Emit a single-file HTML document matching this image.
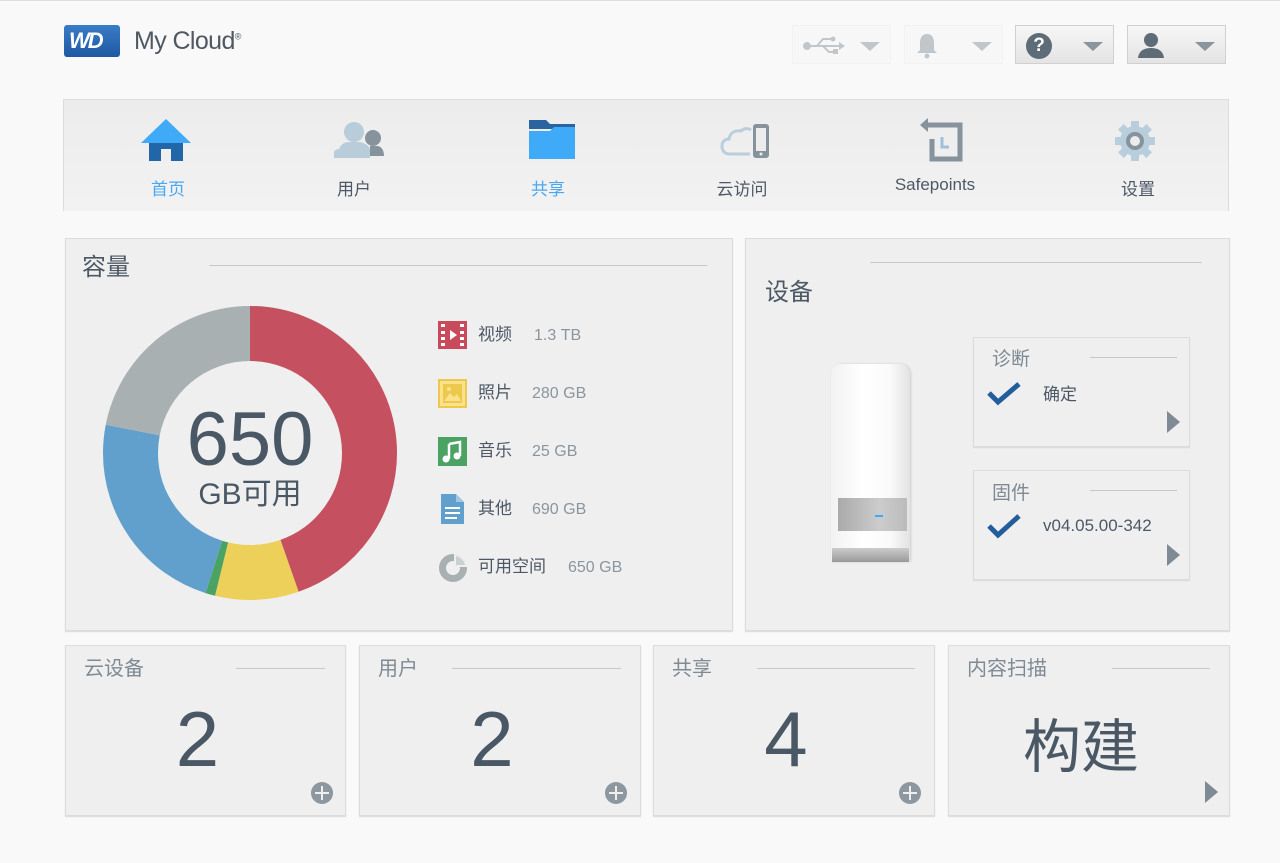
<!DOCTYPE html>
<html><head><meta charset="utf-8"><style>
*{margin:0;padding:0;box-sizing:border-box}
body{width:1280px;height:863px;background:#f9f9f9;font-family:"Liberation Sans","Noto Sans CJK SC",sans-serif;position:relative;overflow:hidden;color:#4d5866}
.a{position:absolute}
.panel{position:absolute;background:#efefef;border:1px solid #dcdcdc;box-shadow:0 1px 1px #d8d8d8}
.hl{position:absolute;height:1px;background:#c8c8c8}
.btn{position:absolute;top:25px;width:99px;height:39px;border:1px solid #d0d0d0;background:linear-gradient(#f6f6f6,#e4e4e4)}
.btn.dis{border-color:#ececec;background:#f6f6f6;opacity:.5}
.tri{position:absolute;right:10px;top:16px;width:0;height:0;border-left:10px solid transparent;border-right:10px solid transparent;border-top:9px solid #8a959e}
.nav{position:absolute;top:175px;font-size:17px;color:#4d5866;text-align:center;width:120px}
.leg{position:absolute;left:478px;font-size:17px;color:#4d5866}
.leg span{font-size:16px;color:#8a959e;margin-left:20px}
.ct{position:absolute;font-size:20px;color:#7e8a94}
.big{position:absolute;font-size:78px;color:#4a5765;text-align:center;width:100%;top:48px}
.plus{position:absolute;width:22px;height:22px;border-radius:50%;background:#8c979f}
.plus:before{content:"";position:absolute;left:4px;top:10px;width:14px;height:2px;background:#efefef}
.plus:after{content:"";position:absolute;left:10px;top:4px;width:2px;height:14px;background:#efefef}
.arr{position:absolute;width:0;height:0;border-top:11px solid transparent;border-bottom:11px solid transparent;border-left:13px solid #7e8a94}
</style></head><body>
<div class="a" style="left:0;top:0;width:1280px;height:1px;background:#ddd"></div>
<div class="a" style="left:64px;top:25px;width:56px;height:32px;border-radius:3px;background:linear-gradient(#3a7cc7,#1e58a2)"></div>
<div class="a" style="left:69px;top:28px;color:#fff;font-weight:bold;font-style:italic;font-size:22px;letter-spacing:-2px">WD</div>
<div class="a" style="left:134px;top:27px;font-size:25px;color:#4f5862;letter-spacing:-.6px">My Cloud<sup style="font-size:9px">®</sup></div>
<div class="btn dis" style="left:792px"><svg class="a" style="left:8px;top:10px" width="50" height="20"><circle cx="6" cy="10" r="4" fill="#8a959e"/><path d="M6 10H40M16 10L22 3H30M22 10L28 16H33" stroke="#8a959e" stroke-width="2" fill="none"/><path d="M38 6L44 10L38 14Z" fill="#8a959e"/><circle cx="32" cy="3" r="2.5" fill="#8a959e"/><rect x="32" y="13" width="5" height="5" fill="#8a959e"/></svg><div class="tri"></div></div>
<div class="btn dis" style="left:904px"><svg class="a" style="left:10px;top:6px" width="24" height="28"><path d="M12 2C7 2 5 6 5 11V18L2 21H22L19 18V11C19 6 17 2 12 2Z" fill="#8a959e"/><circle cx="12" cy="24" r="2.5" fill="#8a959e"/></svg><div class="tri"></div></div>
<div class="btn" style="left:1015px"><div class="a" style="left:10px;top:7px;width:26px;height:26px;border-radius:50%;background:#5e6c78;color:#fff;font-weight:bold;font-size:19px;text-align:center;line-height:26px">?</div><div class="tri"></div></div>
<div class="btn" style="left:1127px"><svg class="a" style="left:8px;top:5px" width="30" height="28"><circle cx="15" cy="9" r="7" fill="#5e6c78"/><path d="M2 27C3 19 9 17 15 17C21 17 27 19 28 27Z" fill="#5e6c78"/></svg><div class="tri"></div></div>
<div class="a" style="left:63px;top:99px;width:1166px;height:112px;background:linear-gradient(#ececec,#f2f2f2);border:1px solid #dcdcdc;border-bottom:none"></div>
<svg class="a" style="left:140px;top:117px" width="52" height="45"><path d="M26 2L1 26H51Z" fill="#3faaf7"/><rect x="9" y="26" width="34" height="18" fill="#2266aa"/><rect x="21" y="32" width="10" height="12" fill="#efefef"/></svg>
<div class="nav" style="left:108px;color:#49a8f2">首页</div>
<svg class="a" style="left:332px;top:120px" width="54" height="40"><circle cx="22" cy="12" r="10" fill="#b8ccd9"/><path d="M7 29C10 22 15 22 18 22H26C30 22 36 24 38 29V38H2V32C3 30 5 29 7 29Z" fill="#b8ccd9"/><circle cx="41" cy="18" r="8" fill="#86939d"/><path d="M38 26H46C50 27 52 31 52 36H38Z" fill="#86939d"/></svg>
<div class="nav" style="left:294px">用户</div>
<svg class="a" style="left:528px;top:119px" width="48" height="41"><path d="M1 1H18L22 5H47V10H1Z" fill="#2a64a0"/><path d="M1 12H22L26 8H47V40H1Z" fill="#3faaf7"/></svg>
<div class="nav" style="left:488px;color:#49a8f2">共享</div>
<svg class="a" style="left:720px;top:122px" width="52" height="38"><path d="M30 32H10C4 32 2 28 2 24C2 19 6 17 9 17C10 10 16 8 21 9C24 6 28 6 31 8" stroke="#b9cedd" stroke-width="3" fill="none"/><rect x="33" y="2" width="16" height="34" rx="3" fill="#86939d"/><rect x="36" y="6" width="10" height="23" fill="#ececec"/><circle cx="41" cy="32" r="1.5" fill="#ececec"/></svg>
<div class="nav" style="left:682px">云访问</div>
<svg class="a" style="left:918px;top:117px" width="46" height="46"><path d="M10 8H42V42H14V22" stroke="#86939d" stroke-width="5" fill="none"/><path d="M2 8L10 1V15Z" fill="#86939d"/><path d="M24 20V30H31" stroke="#9fc0dc" stroke-width="3" fill="none"/></svg>
<div class="nav" style="left:875px;top:175px">Safepoints</div>
<svg class="a" style="left:1114px;top:120px" width="42" height="42"><g fill="#b9cedd"><circle cx="21" cy="21" r="15"/><rect x="17" y="1" width="8" height="40"/><rect x="1" y="17" width="40" height="8"/><rect x="17" y="1" width="8" height="40" transform="rotate(45 21 21)"/><rect x="17" y="1" width="8" height="40" transform="rotate(-45 21 21)"/></g><circle cx="21" cy="21" r="9" fill="#86939d"/><circle cx="21" cy="21" r="5" fill="#ececec"/></svg>
<div class="nav" style="left:1078px">设置</div>
<div class="panel" style="left:65px;top:238px;width:668px;height:393px"></div>
<div class="a" style="left:82px;top:247px;font-size:24px;color:#4d5866">容量</div>
<div class="hl" style="left:209px;top:265px;width:498px"></div>
<svg class="a" style="left:100px;top:303px" width="300" height="300" viewBox="0 0 300 300">
<g transform="rotate(-90 150 150)" fill="none" stroke-width="55">
<circle cx="150" cy="150" r="119.5" stroke="#c55060" stroke-dasharray="335 1000" stroke-dashoffset="0"/>
<circle cx="150" cy="150" r="119.5" stroke="#ecd05a" stroke-dasharray="69 1000" stroke-dashoffset="-335"/>
<circle cx="150" cy="150" r="119.5" stroke="#4aa363" stroke-dasharray="8 1000" stroke-dashoffset="-404"/>
<circle cx="150" cy="150" r="119.5" stroke="#61a0cc" stroke-dasharray="174 1000" stroke-dashoffset="-412"/>
<circle cx="150" cy="150" r="119.5" stroke="#a9b0b2" stroke-dasharray="165 1000" stroke-dashoffset="-586"/>
</g></svg>
<div class="a" style="left:150px;top:397px;width:200px;text-align:center;font-size:76px;color:#4a5765;line-height:86px">650</div>
<div class="a" style="left:150px;top:469px;width:200px;text-align:center;font-size:30px;color:#4a5765">GB可用</div>
<svg class="a" style="left:438px;top:321px" width="30" height="28"><rect width="29" height="28" fill="#c94a5a"/><g fill="#fff"><rect x="3" y="3" width="4" height="3"/><rect x="3" y="10" width="4" height="3"/><rect x="3" y="16" width="4" height="3"/><rect x="3" y="22" width="4" height="3"/><rect x="22" y="3" width="4" height="3"/><rect x="22" y="10" width="4" height="3"/><rect x="22" y="16" width="4" height="3"/><rect x="22" y="22" width="4" height="3"/><path d="M12 9L19 14L12 19Z"/></g></svg>
<div class="leg" style="top:320px">视频<span style="margin-left:22px">1.3 TB</span></div>
<svg class="a" style="left:438px;top:379px" width="30" height="29"><rect x="1" y="1" width="27" height="27" fill="#fae18a" stroke="#ecc94d" stroke-width="2"/><rect x="5" y="5" width="19" height="19" fill="#ecc94d"/><path d="M6 22L12 14L16 18L19 15L23 22Z" fill="#fae18a"/><circle cx="11" cy="10" r="2" fill="#fae18a"/></svg>
<div class="leg" style="top:378px">照片<span>280 GB</span></div>
<svg class="a" style="left:438px;top:437px" width="30" height="29"><rect width="29" height="29" fill="#4aa363"/><path d="M11 7L22 5V19" stroke="#fff" stroke-width="2.5" fill="none"/><path d="M11 7V22" stroke="#fff" stroke-width="2.5"/><circle cx="8" cy="22" r="3.5" fill="#fff"/><circle cx="19" cy="19" r="3.5" fill="#fff"/></svg>
<div class="leg" style="top:436px">音乐<span>25 GB</span></div>
<svg class="a" style="left:441px;top:494px" width="24" height="30"><path d="M0 0H15L23 8V30H0Z" fill="#61a0cc"/><path d="M15 0V8H23" fill="#9fc6e3"/><g fill="#fff"><rect x="4" y="13" width="15" height="2"/><rect x="4" y="18" width="15" height="2"/><rect x="4" y="23" width="12" height="2"/></g></svg>
<div class="leg" style="top:494px">其他<span>690 GB</span></div>
<svg class="a" style="left:438px;top:553px" width="30" height="30"><circle cx="15" cy="15" r="10.5" fill="none" stroke="#a9b0b2" stroke-width="7"/><path d="M16 1A14 14 0 0 1 29 14L16 14Z" fill="#efefef"/><path d="M18 3A12 12 0 0 1 27 12L18 12Z" fill="#a9b0b2" opacity=".5"/></svg>
<div class="leg" style="top:552px">可用空间<span style="margin-left:22px">650 GB</span></div>
<div class="panel" style="left:745px;top:238px;width:485px;height:393px"></div>
<div class="hl" style="left:870px;top:262px;width:332px"></div>
<div class="a" style="left:765px;top:272px;font-size:24px;color:#4d5866">设备</div>
<div class="a" style="left:831px;top:364px;width:79px;height:198px;border-radius:10px 10px 2px 2px;background:linear-gradient(90deg,#f2f2f2,#fff 40%,#fafafa 75%,#e2e2e2);box-shadow:1px 0 2px #ccc"></div>
<div class="a" style="left:838px;top:498px;width:69px;height:33px;background:linear-gradient(90deg,#aaa,#ccc 60%,#bbb)"></div>
<div class="a" style="left:875px;top:515px;width:8px;height:2px;background:#3faaf7"></div>
<div class="a" style="left:832px;top:548px;width:77px;height:14px;background:linear-gradient(#ccc,#999)"></div>
<div class="panel" style="left:973px;top:337px;width:217px;height:110px"></div>
<div class="ct" style="left:992px;top:344px;font-size:19px">诊断</div>
<div class="hl" style="left:1090px;top:357px;width:87px"></div>
<svg class="a" style="left:986px;top:381px" width="36" height="26"><path d="M3 12L12 21L33 3" stroke="#235e9c" stroke-width="5" fill="none"/></svg>
<div class="a" style="left:1043px;top:380px;font-size:17px;color:#4d5866">确定</div>
<div class="arr" style="left:1167px;top:411px"></div>
<div class="panel" style="left:973px;top:470px;width:217px;height:110px"></div>
<div class="ct" style="left:992px;top:478px;font-size:19px">固件</div>
<div class="hl" style="left:1090px;top:490px;width:87px"></div>
<svg class="a" style="left:986px;top:513px" width="36" height="28"><path d="M3 13L12 22L33 3" stroke="#235e9c" stroke-width="5" fill="none"/></svg>
<div class="a" style="left:1043px;top:516px;font-size:17px;color:#4d5866">v04.05.00-342</div>
<div class="arr" style="left:1167px;top:544px"></div>
<div class="panel" style="left:65px;top:645px;width:281px;height:171px"><div class="ct" style="left:18px;top:6px">云设备</div><div class="hl" style="left:170px;top:22px;width:89px"></div><div class="big" style="left:-8px">2</div><div class="plus" style="left:245px;top:136px"></div></div>
<div class="panel" style="left:359px;top:645px;width:282px;height:171px"><div class="ct" style="left:18px;top:6px">用户</div><div class="hl" style="left:92px;top:22px;width:169px"></div><div class="big" style="left:-8px">2</div><div class="plus" style="left:245px;top:136px"></div></div>
<div class="panel" style="left:653px;top:645px;width:282px;height:171px"><div class="ct" style="left:18px;top:6px">共享</div><div class="hl" style="left:103px;top:22px;width:158px"></div><div class="big" style="left:-8px">4</div><div class="plus" style="left:245px;top:136px"></div></div>
<div class="panel" style="left:948px;top:645px;width:282px;height:171px"><div class="ct" style="left:18px;top:6px">内容扫描</div><div class="hl" style="left:163px;top:22px;width:98px"></div><div class="big" style="font-size:58px;top:54px;left:-8px">构建</div><div class="arr" style="left:256px;top:135px"></div></div>
</body></html>
